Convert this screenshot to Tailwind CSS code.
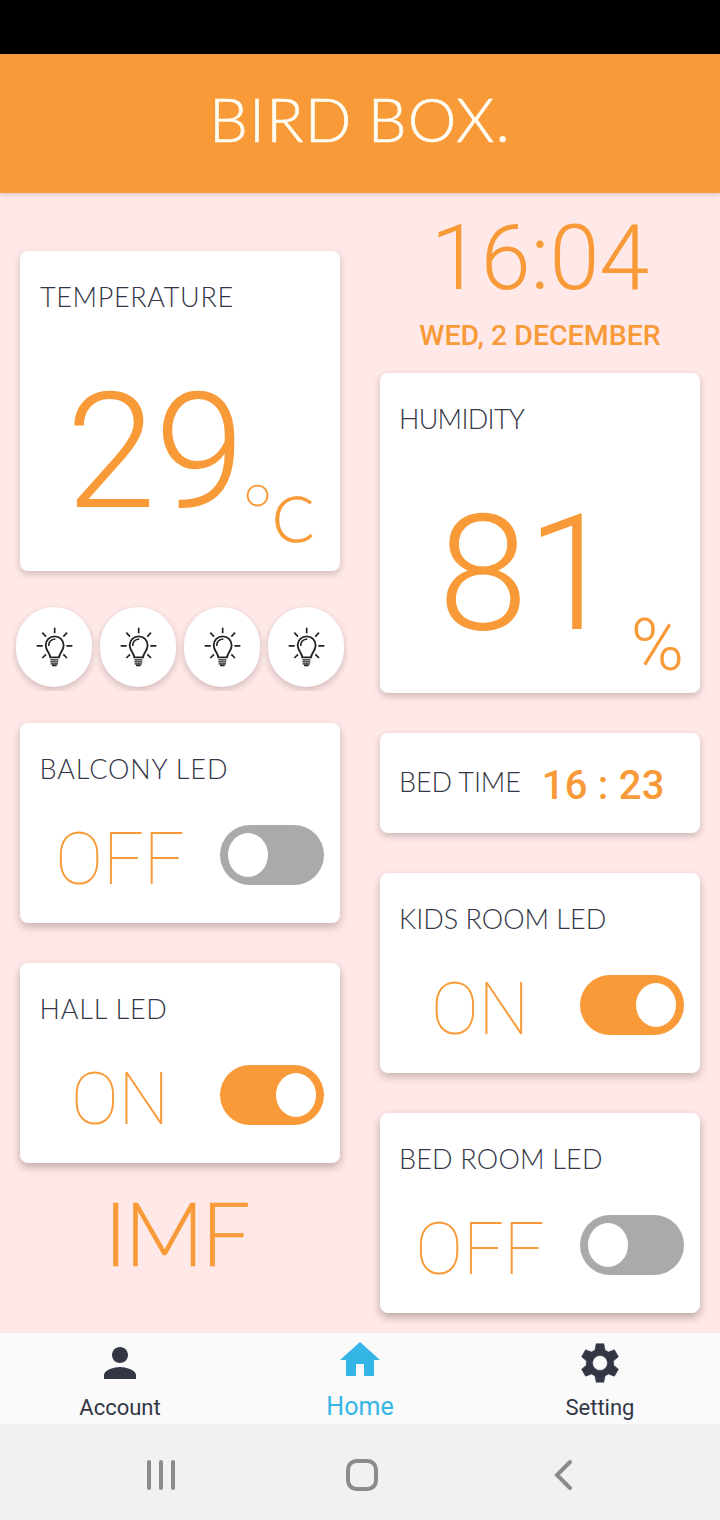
<!DOCTYPE html>
<html lang="en">
<head>
<meta charset="utf-8">
<title>Bird Box</title>
<script src="https://cdn.jsdelivr.net/npm/@tailwindcss/browser@4"></script>
</head>
<body class="w-[720px] h-[1520px] overflow-hidden flex flex-col bg-[#fee9e8] text-[#333645] font-['Roboto',sans-serif]">
<svg class="hidden">
  <symbol id="bulb" viewBox="101 107 120 126">
    <g fill="none" stroke="#222" stroke-width="5.500">
      <path stroke-width="5" d="M163 112v17M109 166.500h18M198 166.500h18M126 127l11 12M200 127l-11 12M126 203l11-11M200 203l-11-11"/>
      <path d="M150 201h26c1-14 14-20 14-36a27 27 0 0 0-54 0c0 16 13 22 14 36z"/>
      <path stroke-width="4.500" d="M145 167c0-12 7-20 20-21"/>
      <path stroke-width="4" d="M150 208.500h24M150 214.500h24M151 220.500h22M155 225.500h14"/>
    </g>
  </symbol>
</svg>
<div class="h-[54px] shrink-0 bg-black"></div>
<header class="h-[139px] shrink-0 bg-[#f89a37] text-[#fffdf3] text-center pt-[27px] shadow-[0_1px_5px_rgba(0,0,0,0.18)] relative">
  <h1 class="font-['Lato',sans-serif] font-light text-[61.5px] leading-[75px] tracking-[1.2px] [word-spacing:-3px] [-webkit-text-stroke:0.6px_#fffdf3]">BIRD BOX.</h1>
</header>

<main class="flex h-[1139px] shrink-0">
  <section class="w-[360px] px-5 pt-[58px] flex flex-col">
    <div class="h-[320px] shrink-0 rounded-lg bg-white shadow-[0_3px_7px_rgba(50,20,20,0.22)] pt-[30px] pl-5">
      <h2 class="font-['Lato',sans-serif] font-light text-[27px] leading-8 tracking-[0.65px]">TEMPERATURE</h2>
      <div class="flex mt-[59px] h-[160px] text-[#f89a37]">
        <span class="ml-[26px] font-light text-[162px] leading-[160px] tracking-[-1.2px]">29</span>
        <span class="font-['Lato',sans-serif] font-thin text-[74px] leading-[60px] mt-[108px] -ml-px [-webkit-text-stroke:1px_#f89a37]">°</span>
        <span class="font-['Lato',sans-serif] font-light text-[62.5px] leading-[60px] mt-[116px] -ml-px [-webkit-text-stroke:0.6px_#f89a37]">C</span>
      </div>
    </div>
    <div class="mt-[32px] h-[88px] -mx-2 px-1 py-1 flex gap-2 overflow-hidden shrink-0">
      <button class="w-[76px] h-[80px] rounded-full bg-white shadow-[0_3px_7px_rgba(50,20,20,0.22)] flex items-center justify-center"><svg class="w-[40px] h-[42px]"><use href="#bulb"/></svg></button>
      <button class="w-[76px] h-[80px] rounded-full bg-white shadow-[0_3px_7px_rgba(50,20,20,0.22)] flex items-center justify-center"><svg class="w-[40px] h-[42px]"><use href="#bulb"/></svg></button>
      <button class="w-[76px] h-[80px] rounded-full bg-white shadow-[0_3px_7px_rgba(50,20,20,0.22)] flex items-center justify-center"><svg class="w-[40px] h-[42px]"><use href="#bulb"/></svg></button>
      <button class="w-[76px] h-[80px] rounded-full bg-white shadow-[0_3px_7px_rgba(50,20,20,0.22)] flex items-center justify-center"><svg class="w-[40px] h-[42px]"><use href="#bulb"/></svg></button>
    </div>
    <div class="mt-[32px] h-[200px] shrink-0 rounded-lg bg-white shadow-[0_4px_8px_rgba(50,20,20,0.26)] pt-[30px]">
      <h2 class="pl-[19.5px] font-['Lato',sans-serif] font-light text-[27px] leading-8 tracking-[0.9px]">BALCONY LED</h2>
      <div class="mt-[40px] flex pr-4">
        <span class="flex-1 text-center font-thin text-[71.5px] leading-[70px] h-[60px] text-[#f89a37]">OFF</span>
        <span class="w-[104px] h-[60px] rounded-full bg-[#aaaaaa] p-2"><span class="block w-[40px] h-[44px] rounded-[50%] bg-white"></span></span>
      </div>
    </div>
    <div class="mt-[40px] h-[200px] shrink-0 rounded-lg bg-white shadow-[0_4px_8px_rgba(50,20,20,0.3)] pt-[30px]">
      <h2 class="pl-[19.5px] font-['Lato',sans-serif] font-light text-[27px] leading-8 tracking-[0.8px]">HALL LED</h2>
      <div class="mt-[40px] flex pr-4">
        <span class="flex-1 text-center font-thin text-[71.5px] leading-[70px] h-[60px] text-[#f89a37]">ON</span>
        <span class="w-[104px] h-[60px] rounded-full bg-[#f89a37] p-2 flex justify-end"><span class="block w-[40px] h-[44px] rounded-[50%] bg-white"></span></span>
      </div>
    </div>
    <div class="mt-[25px] pr-[8px] text-center font-['Lato',sans-serif] font-light text-[88px] leading-[88px] tracking-[-3px] text-[#f89a37] [-webkit-text-stroke:0.6px_#f89a37]">IMF</div>
  </section>

  <section class="w-[360px] px-5 pt-[21px] flex flex-col">
    <div class="text-center font-light text-[90px] leading-[90px] text-[#f89a37]">16:04</div>
    <div class="mt-[14px] text-center font-medium text-[28.5px] leading-9 text-[#f89a37]">WED, 2 DECEMBER</div>
    <div class="mt-[19px] h-[320px] shrink-0 rounded-lg bg-white shadow-[0_3px_7px_rgba(50,20,20,0.24)] pt-[30px] pl-[19px]">
      <h2 class="font-['Lato',sans-serif] font-light text-[27px] leading-8 tracking-[-0.7px]">HUMIDITY</h2>
      <div class="flex mt-[59px] h-[160px] text-[#f89a37]">
        <span class="ml-[39px] font-light text-[162px] leading-[160px] tracking-[-1px]">81</span>
        <span class="ml-[15px] font-light text-[72px] leading-[72px] mt-[116px]">%</span>
      </div>
    </div>
    <div class="mt-[40px] h-[100px] shrink-0 rounded-lg bg-white shadow-[0_3px_7px_rgba(50,20,20,0.24)] pt-[33px] pl-[19px] flex">
      <h2 class="font-['Lato',sans-serif] font-light text-[27px] leading-8 tracking-[-0.1px]">BED TIME</h2>
      <span class="ml-[21px] font-medium text-[40px] leading-10 text-[#f89a37] whitespace-nowrap tracking-[0.2px]">16 : 23</span>
    </div>
    <div class="mt-[40px] h-[200px] shrink-0 rounded-lg bg-white shadow-[0_4px_8px_rgba(50,20,20,0.26)] pt-[30px]">
      <h2 class="pl-[19px] font-['Lato',sans-serif] font-light text-[27px] leading-8">KIDS ROOM LED</h2>
      <div class="mt-[40px] flex pr-4">
        <span class="flex-1 text-center font-thin text-[71.5px] leading-[70px] h-[60px] text-[#f89a37]">ON</span>
        <span class="w-[104px] h-[60px] rounded-full bg-[#f89a37] p-2 flex justify-end"><span class="block w-[40px] h-[44px] rounded-[50%] bg-white"></span></span>
      </div>
    </div>
    <div class="mt-[40px] h-[200px] shrink-0 rounded-lg bg-white shadow-[0_4px_8px_rgba(50,20,20,0.32)] pt-[30px]">
      <h2 class="pl-[19px] font-['Lato',sans-serif] font-light text-[27px] leading-8 tracking-[0.2px]">BED ROOM LED</h2>
      <div class="mt-[40px] flex pr-4">
        <span class="flex-1 text-center font-thin text-[71.5px] leading-[70px] h-[60px] text-[#f89a37]">OFF</span>
        <span class="w-[104px] h-[60px] rounded-full bg-[#aaaaaa] p-2"><span class="block w-[40px] h-[44px] rounded-[50%] bg-white"></span></span>
      </div>
    </div>
  </section>
</main>

<nav class="h-[92px] shrink-0 bg-[#fafafa] border-t border-[#f3e4e4] grid grid-cols-3 text-center">
  <a class="flex flex-col items-center pt-[6px] text-[22px]">
    <svg class="size-12" viewBox="0 0 24 24" fill="#333645"><path d="M12 12c2.210 0 4-1.790 4-4s-1.790-4-4-4-4 1.790-4 4 1.790 4 4 4zm0 2c-2.670 0-8 1.340-8 4v2h16v-2c0-2.660-5.330-4-8-4z"/></svg>
    <span class="leading-7 mt-[7px]">Account</span>
  </a>
  <a class="flex flex-col items-center pt-[3px] text-[25px] text-[#35b5e5]">
    <svg class="size-12" viewBox="0 0 24 24" fill="#35b5e5"><path d="M10 20v-6h4v6h5v-8h3L12 3 2 12h3v8z"/></svg>
    <span class="leading-7 mt-[9px]">Home</span>
  </a>
  <a class="flex flex-col items-center pt-[6px] text-[22px]">
    <svg class="size-12" viewBox="0 0 24 24" fill="#333645"><path fill-rule="evenodd" d="M10.100 2.400h3.800l.6 3.100 1.700 1 3-1.100 2 3.500-2.400 2v2.200l2.400 2-2 3.500-3-1.100-1.700 1-.6 3.100h-3.800l-.6-3.100-1.700-1-3 1.100-2-3.500 2.400-2v-2.200l-2.400-2 2-3.500 3 1.100 1.700-1zM12 8.250a3.750 3.750 0 1 0 0 7.500 3.750 3.750 0 1 0 0-7.500z" stroke="#333645" stroke-width=".3" stroke-linejoin="round"/></svg>
    <span class="leading-7 mt-[7px]">Setting</span>
  </a>
</nav>
<footer class="h-[96px] shrink-0 bg-[#f1f1f1] flex items-center pt-[6px] text-[#8b8b8b]">
  <svg class="w-8 h-9 ml-[145px]" viewBox="0 0 32 36" fill="none" stroke="currentColor" stroke-width="4" stroke-linecap="round"><path d="M4 5v26M16 5v26M28 5v26"/></svg>
  <svg class="w-9 h-9 ml-[167px]" viewBox="0 0 36 36" fill="none" stroke="currentColor" stroke-width="4"><rect x="4" y="4" width="28" height="28" rx="8.500"/></svg>
  <svg class="w-6 h-9 ml-[172px]" viewBox="0 0 24 36" fill="none" stroke="currentColor" stroke-width="4" stroke-linecap="round"><path d="M18 5L5 18l13 13"/></svg>
</footer>
</body>
</html>
